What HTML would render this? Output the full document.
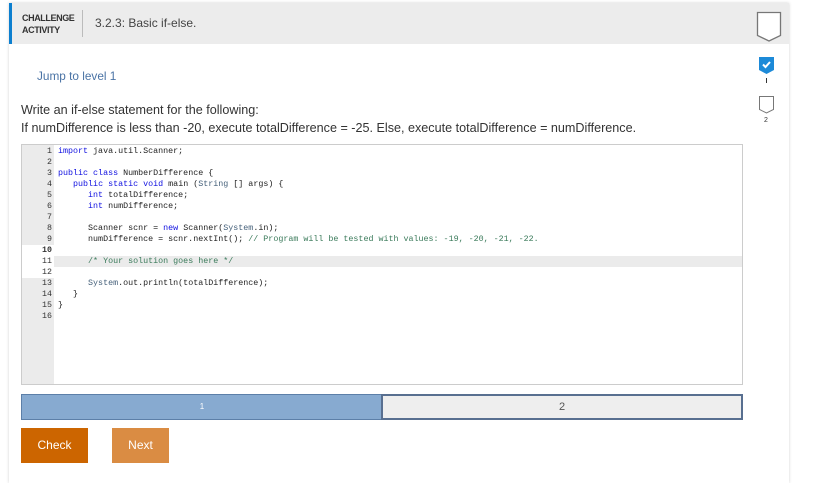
<!DOCTYPE html>
<html><head><style>
*{margin:0;padding:0;box-sizing:border-box}
body{width:819px;height:477px;background:#fff;font-family:"Liberation Sans",sans-serif;position:relative;overflow:hidden}
.card{position:absolute;left:9px;top:3px;width:780px;height:480px;background:#fff;box-shadow:0 0 3px rgba(0,0,0,.18)}
.hdr{position:absolute;left:0;top:0;width:780px;height:41px;background:#ececec;border-left:3px solid #0c7fcf}
.ca{position:absolute;left:10px;top:9px;font-size:9px;line-height:12px;font-weight:bold;color:#333;letter-spacing:-.4px}
.sep{position:absolute;left:70px;top:7px;width:1px;height:27px;background:#bbb}
.title{position:absolute;left:83px;top:13px;font-size:12px;color:#444}
.jump{position:absolute;left:37px;top:69px;font-size:11.8px;color:#4a73a5}
.p{position:absolute;left:21px;font-size:12.6px;color:#333;white-space:nowrap}
.code{position:absolute;left:21px;top:144px;width:722px;height:241px;border:1px solid #ccc;background:#fff}
.gut{position:absolute;left:0;top:0;width:32px;height:239px;background:#ebebeb}
.ln{position:absolute;left:0;width:30px;text-align:right;font:8.3px/11px "Liberation Mono",monospace;color:#333}
.src{position:absolute;left:36px;top:1px;font:8.35px/11px "Liberation Mono",monospace;color:#222;white-space:pre}
.k{color:#1010e0}.c{color:#3a7a5a}.t{color:#45607a}
.hl{position:absolute;left:32px;top:111px;width:688px;height:11px;background:#ebebeb}
.wl{position:absolute;left:0;height:11px;width:32px;background:#fff}
.bar1{position:absolute;left:21px;top:394px;width:362px;height:26px;background:#87aad0;border:1px solid #5c7fa8;color:#fff;font-size:8px;text-align:center;line-height:24px}
.bar2{position:absolute;left:381px;top:394px;width:362px;height:26px;background:#eee;border:2px solid #586f90;color:#555;font-size:11px;text-align:center;line-height:22px}
.btn{position:absolute;top:428px;height:35px;color:#fff;font-size:12px;text-align:center;line-height:35px}
</style></head><body>
<div class="card">
<div class="hdr"><div class="ca">CHALLENGE<br>ACTIVITY</div><div class="sep"></div><div class="title">3.2.3: Basic if-else.</div></div>
<svg style="position:absolute;left:747px;top:8px" width="26" height="32"><path d="M1.5 1.5H24.5V24.5L13 30L1.5 24.5Z" fill="#fff" stroke="#777" stroke-width="1.3"/></svg>
<svg style="position:absolute;left:750px;top:54px" width="16" height="18"><path d="M0 0H15V13L7.5 17L0 13Z" fill="#1d8ad8"/><path d="M4 7.5L6.5 10L11 5" stroke="#fff" stroke-width="2" fill="none"/></svg>
<div style="position:absolute;left:757px;top:75px;width:1px;height:5px;background:#333"></div>
<svg style="position:absolute;left:750px;top:93px" width="16" height="19"><path d="M0.5 0.5H14.5V13.5L7.5 17L0.5 13.5Z" fill="#fff" stroke="#777"/></svg>
<div style="position:absolute;left:755px;top:114px;font-size:7px;color:#333">2</div>
</div>
<div class="jump">Jump to level 1</div>
<div class="p" style="top:103px">Write an if-else statement for the following:</div>
<div class="p" style="top:121px">If numDifference is less than -20, execute totalDifference = -25. Else, execute totalDifference = numDifference.</div>
<div class="code">
<div class="gut"></div>
<div class="wl" style="top:100px"></div><div class="wl" style="top:111px;background:#fff"></div><div class="wl" style="top:122px"></div>
<div class="hl"></div>
<div class="ln" style="top:1px">1<br>2<br>3<br>4<br>5<br>6<br>7<br>8<br>9<br><b>10</b><br>11<br>12<br>13<br>14<br>15<br>16</div>
<div class="src"><span class="k">import</span> java.util.Scanner;

<span class="k">public class</span> NumberDifference {
   <span class="k">public static void</span> main (<span class="t">String</span> [] args) {
      <span class="k">int</span> totalDifference;
      <span class="k">int</span> numDifference;

      Scanner scnr = <span class="k">new</span> Scanner(<span class="t">System</span>.in);
      numDifference = scnr.nextInt(); <span class="c">// Program will be tested with values: -19, -20, -21, -22.</span>

      <span class="c">/* Your solution goes here */</span>

      <span class="t">System</span>.out.println(totalDifference);
   }
}
</div>
</div>
<div class="bar1">1</div>
<div class="bar2">2</div>
<div class="btn" style="left:21px;width:67px;background:#cc6500">Check</div>
<div class="btn" style="left:112px;width:57px;background:#da8c43">Next</div>
</body></html>
